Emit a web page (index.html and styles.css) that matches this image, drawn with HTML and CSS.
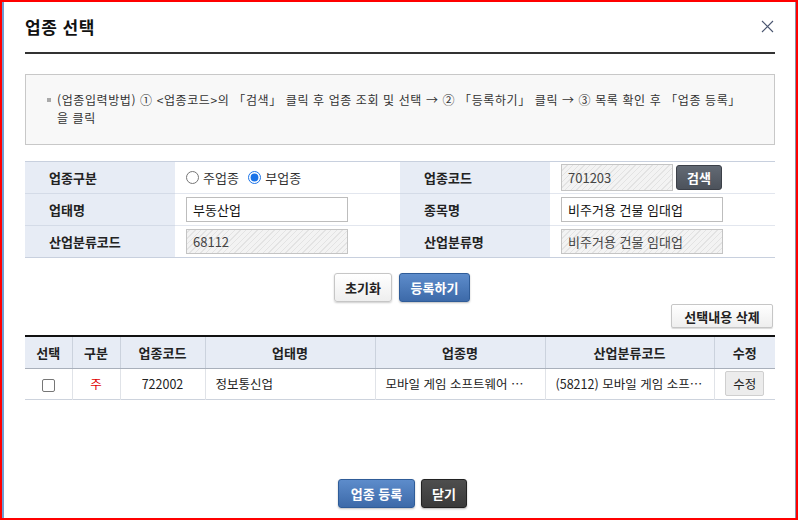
FILE: index.html
```html
<!DOCTYPE html>
<html lang="ko">
<head>
<meta charset="utf-8">
<title>업종 선택</title>
<link rel="stylesheet" href="styles.css">
</head>
<body>
<div class="frame">
  <div class="dialog">
    <div class="dlg-head">
      <h1 class="dlg-title">업종 선택</h1>
      <button class="dlg-close" type="button" aria-label="닫기">
        <svg width="13" height="13" viewBox="0 0 13 13"><path d="M1 1L12 12M12 1L1 12" stroke="#4a5670" stroke-width="1.1" fill="none"/></svg>
      </button>
    </div>

    <div class="info-box">
      <p class="info-line"><span class="bullet"></span><span class="info-text">(업종입력방법) ① &lt;업종코드&gt;의 「검색」 클릭 후 업종 조회 및 선택 → ② 「등록하기」 클릭 → ③ 목록 확인 후 「업종 등록」<br>을 클릭</span></p>
    </div>

    <table class="form-table">
      <colgroup><col class="c-lab"><col class="c-val"><col class="c-lab2"><col></colgroup>
      <tr>
        <th>업종구분</th>
        <td>
          <label class="radio"><input type="radio" name="kind"> 주업종</label>
          <label class="radio"><input type="radio" name="kind" checked> 부업종</label>
        </td>
        <th>업종코드</th>
        <td><span class="inp ro w112">701203</span><button class="btn btn-dark btn-search" type="button">검색</button></td>
      </tr>
      <tr>
        <th>업태명</th>
        <td><span class="inp w162">부동산업</span></td>
        <th>종목명</th>
        <td><span class="inp w162">비주거용 건물 임대업</span></td>
      </tr>
      <tr>
        <th>산업분류코드</th>
        <td><span class="inp ro w162">68112</span></td>
        <th>산업분류명</th>
        <td><span class="inp ro w162">비주거용 건물 임대업</span></td>
      </tr>
    </table>

    <div class="btn-row">
      <button class="btn btn-light" type="button">초기화</button>
      <button class="btn btn-blue" type="button">등록하기</button>
    </div>

    <div class="del-row">
      <button class="btn btn-light btn-del" type="button">선택내용 삭제</button>
    </div>

    <table class="grid">
      <colgroup>
        <col class="g1"><col class="g2"><col class="g3"><col class="g4"><col class="g5"><col class="g6"><col>
      </colgroup>
      <thead>
        <tr><th>선택</th><th>구분</th><th>업종코드</th><th>업태명</th><th>업종명</th><th>산업분류코드</th><th>수정</th></tr>
      </thead>
      <tbody>
        <tr>
          <td class="center"><span class="chk"></span></td>
          <td class="center red">주</td>
          <td class="center">722002</td>
          <td>정보통신업</td>
          <td>모바일 게임 소프트웨어 …</td>
          <td>(58212) 모바일 게임 소프…</td>
          <td class="center"><button class="btn btn-grey" type="button">수정</button></td>
        </tr>
      </tbody>
    </table>

    <div class="foot">
      <button class="btn btn-blue btn-foot" type="button">업종 등록</button>
      <button class="btn btn-dark btn-foot" type="button">닫기</button>
    </div>
  </div>
</div>
</body>
</html>
```

FILE: styles.css
```css
* { box-sizing: border-box; }
html, body { margin: 0; padding: 0; }
body {
  font-family: "Noto Sans CJK KR", "Noto Sans", sans-serif;
  font-size: 12px;
  color: #222;
  background: #fff;
}
.frame {
  width: 798px;
  height: 520px;
  border: 2px solid #ff0000;
}
.dialog {
  height: 100%;
  border-left: 2px solid #6f9bd2;
  border-right: 1px solid #8b93a8;
  padding: 0 20px 0 21px;
  display: flex;
  flex-direction: column;
}
.dlg-head {
  height: 52px;
  border-bottom: 2px solid #333;
  display: flex;
  align-items: center;
  justify-content: space-between;
  padding-bottom: 2px;
}
.dlg-title {
  margin: 0;
  font-size: 17px;
  font-weight: bold;
  color: #111;
  letter-spacing: 0.5px;
}
.dlg-close {
  border: 0;
  background: none;
  padding: 0;
  margin-right: 1px;
  width: 13px;
  height: 13px;
  display: flex;
}
.info-box {
  margin-top: 20px;
  border: 1px solid #c8c8c8;
  background: #f8f8f8;
  padding: 16px 20px 18px 21px;
}
.info-line {
  margin: 0;
  display: flex;
  line-height: 17.5px;
  color: #333;
}
.bullet {
  width: 4px;
  height: 4px;
  background: #aaa;
  margin: 7px 6px 0 0;
  flex: none;
}
.info-text { font-size: 12px; letter-spacing: 0.6px; }

.form-table {
  margin-top: 16px;
  width: 100%;
  border-collapse: collapse;
  border-top: 1px solid #c8d0de;
  border-bottom: 1px solid #c8d0de;
}
.c-lab { width: 150px; }
.c-val { width: 225px; }
.c-lab2 { width: 150px; }
.form-table th, .form-table td {
  height: 32px;
  border-bottom: 1px solid #e2e6ee;
  padding: 0;
}
.form-table th {
  background: #e7ecf5;
  text-align: left;
  padding-left: 24px;
  font-size: 13px;
  font-weight: bold;
  color: #222;
}
.form-table td { padding-left: 11px; }
.form-table tr:last-child th, .form-table tr:last-child td { border-bottom: 0; }
.form-table tr th { border-bottom-color: #d4dbe7; }
.radio {
  display: inline-flex;
  align-items: center;
  margin-right: 6px;
  color: #333;
  font-size: 13px;
}
.radio input {
  margin: 0 4px 0 0;
  width: 13px;
  height: 13px;
  accent-color: #1a73e8;
}
.inp {
  display: inline-flex;
  align-items: center;
  height: 25px;
  border: 1px solid #bdbdbd;
  background: #fff;
  padding-left: 6px;
  vertical-align: middle;
  font-size: 13px;
  color: #111;
}
.inp.ro {
  color: #444;
  background: repeating-linear-gradient(-45deg, #f3f3f3 0 3px, #e3e3e3 3px 4px);
  border-color: #c4c4c4;
}
.w112 { width: 112px; height: 27px; }
.w162 { width: 162px; }

.btn {
  font-family: inherit;
  font-weight: bold;
  border-radius: 3px;
  cursor: pointer;
  padding: 0;
  vertical-align: middle;
}
.btn-light {
  height: 29px;
  border: 1px solid #c6c6c6;
  background: linear-gradient(#ffffff, #eeeeee);
  box-shadow: 0 1px 2px rgba(0,0,0,0.2);
  color: #222;
  font-size: 13px;
}
.btn-blue {
  height: 29px;
  border: 1px solid #2f5c98;
  background: linear-gradient(#5d8ccb, #3d6aa9);
  box-shadow: 0 1px 2px rgba(0,0,0,0.25);
  color: #fff;
  font-size: 13px;
}
.btn-dark {
  border: 1px solid #3c4048;
  background: linear-gradient(#636a74, #4c525b);
  color: #fff;
  font-size: 13px;
}
.btn-search {
  width: 46px;
  height: 25px;
  margin-left: 3px;
}
.btn-row {
  margin-top: 15px;
  display: flex;
  justify-content: center;
  gap: 7px;
  padding-left: 4px;
}
.btn-row .btn-light { width: 58px; }
.btn-row .btn-blue { width: 71px; }
.del-row {
  margin-top: 2px;
  display: flex;
  justify-content: flex-end;
  padding-right: 2px;
}
.btn-del {
  width: 102px;
  height: 24px;
  border-radius: 2px;
  box-shadow: 0 1px 1px rgba(0,0,0,0.15);
}

.grid {
  margin-top: 7px;
  width: 100%;
  border-collapse: collapse;
  table-layout: fixed;
  border-top: 2px solid #111;
  border-bottom: 1px solid #cdd3dd;
}
.g1 { width: 47px; }
.g2 { width: 48px; }
.g3 { width: 85px; }
.g4 { width: 170px; }
.g5 { width: 170px; }
.g6 { width: 169px; }
.grid th {
  height: 32px;
  background: #e7ecf5;
  font-size: 13px;
  font-weight: bold;
  color: #222;
  border-left: 1px solid #cbd2dd;
  border-bottom: 1px solid #a9b0bb;
  padding: 0;
}
.grid th:first-child, .grid td:first-child { border-left: 0; }
.grid td {
  height: 31px;
  border-left: 1px solid #e0e3e8;
  padding: 0 10px;
  color: #222;
  font-size: 12.5px;
  white-space: nowrap;
  overflow: hidden;
}
.grid td.center { text-align: center; padding: 0; }
.grid td.red { color: #e00000; }
.chk {
  display: inline-block;
  width: 13px;
  height: 13px;
  border: 1px solid #767676;
  border-radius: 2px;
  background: #fff;
  vertical-align: middle;
}
.btn-grey {
  width: 39px;
  height: 25px;
  border: 1px solid #cfcfcf;
  background: #ececec;
  color: #222;
  font-weight: normal;
  font-size: 12.5px;
  border-radius: 2px;
}

.foot {
  margin-top: auto;
  margin-bottom: 10px;
  display: flex;
  justify-content: center;
  gap: 6px;
  padding-left: 5px;
}
.btn-foot { height: 29px; }
.foot .btn-blue { width: 77px; }
.foot .btn-dark {
  width: 46px;
  background: linear-gradient(#4e4e4e, #3a3a3a);
  border-color: #222;
  box-shadow: 0 1px 2px rgba(0,0,0,0.3);
}
```
